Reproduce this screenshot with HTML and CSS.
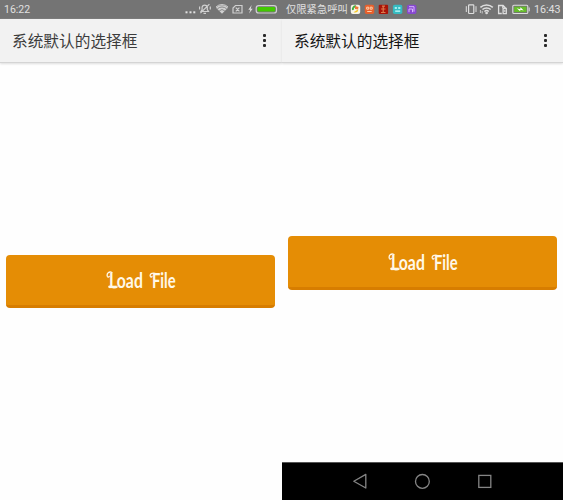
FILE: index.html
```html
<!DOCTYPE html>
<html lang="zh-CN">
<head>
<meta charset="utf-8">
<title>系统默认的选择框</title>
<link rel="stylesheet" href="styles.css">
</head>
<body>
<main class="screens">
  <section class="phone phone-left">
    <header class="status">
      <span class="clock">16:22</span>
      <svg class="status-icons" width="96" height="19" viewBox="0 0 96 19" fill="none" stroke="#d0d0d0">
        <g fill="#e2e2e2" stroke="none"><rect x="0.5" y="11.3" width="2" height="2"/><rect x="4.5" y="11.3" width="2" height="2"/><rect x="8.3" y="11.3" width="2" height="2"/></g>
        <path stroke-width="1.2" d="M16 11.5h7.5l-1.2-2V7a2.7 2.7 0 0 0-5.2 0v2.5zM18.5 13.3h2.5M15.4 13.2l9-9M14.6 6.5v3M25.3 6.5v3"/>
        <path d="M31 7.8a8.5 8.5 0 0 1 12 0l-6 6z" fill="#d0d0d0" stroke="none"/><path d="M32.3 8.9a6.7 6.7 0 0 1 9.4 0M34.2 10.9a4 4 0 0 1 5.6 0" stroke="#747474" stroke-width=".8"/><path d="M31 7a8.5 8.5 0 0 1 12 0"/>
        <path d="M50.5 5.5h6.5v7.5h-9V8zM50.8 7.7l3.6 3.6m0-3.6l-3.6 3.6" stroke-width="1.2"/>
        <path d="M66.7 5l-3.4 4.7h2L64 13.5l3.7-4.8h-2z" fill="#ddd" stroke="none"/>
        <rect x="71.2" y="5.6" width="20.3" height="7.4" rx="2.6" stroke-width="1.2"/>
        <rect x="72.6" y="7" width="17.5" height="4.6" rx="1.1" fill="#42c900" stroke="none"/>
      </svg>
    </header>
    <div class="toolbar"><h1>系统默认的选择框</h1><span class="more"><i></i><i></i><i></i></span></div>
    <div class="content">
      <button class="load"><span class="label"><span class="word">Load</span><span class="word">File</span>
        <svg class="swash" width="74" height="26" viewBox="0 0 74 26" fill="none" stroke="#fff8e8" stroke-width="1.3" stroke-linecap="round"><path d="M6 5.5C3 4 .5 6.5 1.3 9.2q.8 1.7 2 .2M5 19.3c-2.5-1-3 1.4-.8 1.2 2.5-.3 4.8 1.6 7-.6M49 6.3c-3-.7-5.2.5-4.8 2.7.2 1.5 1.5 1.3 1.8.3"/></svg>
      </span></button>
    </div>
  </section>
  <section class="phone phone-right">
    <header class="status">
      <span class="carrier">仅限紧急呼叫</span>
      <svg class="apps" width="68" height="19" viewBox="0 0 68 19">
        <rect x=".8" y="4.8" width="9.4" height="9.2" rx="2" fill="#f7f4e9"/><path d="M3 10a2.8 2.8 0 0 1 3-3.7" fill="none" stroke="#45af43" stroke-width="2"/><path d="M5 6l3.5 1-.5 2.5L5 9z" fill="#ef7938"/><path d="M3.5 12.3l4.8-3c0 2.5-2 4-4.8 3z" fill="#f6c726"/>
        <rect x="14.8" y="4.8" width="9.4" height="9.2" rx="1.8" fill="#e7602d"/><path d="M16.7 7.2h2v2h-2zM20.2 7.2h2v2h-2zM17.2 11.5h4.5" fill="none" stroke="#ffd1aa"/>
        <rect x="28.7" y="4.8" width="9.4" height="9.2" rx="1" fill="#a91408"/><path d="M32 6.2h3M33.2 6.5v6M31 9h4.5M31 12.5h4.5" stroke="#dc794d" stroke-width="1.2"/>
        <rect x="42.9" y="4.8" width="9.4" height="9.2" rx="1.8" fill="#36bbc1"/><path d="M44.7 8h2.2M48.2 8h2.2M45.2 11.2h5" stroke="#c9ffff" stroke-width="1.3"/>
        <rect x="57" y="4.8" width="9.4" height="9.2" rx="1.8" fill="#8748cf"/><path d="M59 6.7h5v5M59 9h3.5v3.2M59 9v3.2" fill="none" stroke="#d8b5ff"/>
      </svg>
      <svg class="status-icons" width="68" height="19" viewBox="0 0 68 19" fill="none" stroke="#dedede">
        <rect x="3.6" y="4.9" width="5.2" height="8.6" rx=".7" stroke-width="1.2"/><path d="M1.3 6.2v5.8M11 6.2v5.8"/>
        <g stroke-width="1.5"><path d="M15.4 7.4a9 9 0 0 1 12.4 0M17.5 9.5a6 6 0 0 1 8.2 0M19.5 11.6a3 3 0 0 1 4.2 0"/><circle cx="21.6" cy="13" r=".6" fill="#dedede"/></g><path d="M15.4 10v3M17.2 11v2.5" stroke-width=".8"/>
        <path d="M36.8 13.5h-3.2v-8h4.5L40.5 8M37.8 5.5V8M38.1 8.3h3.2v5.3h-3.2z" stroke-width="1.3"/><path d="M39.8 9.7v2.4"/>
        <rect x="47.8" y="5.3" width="15" height="8.2" rx="1" stroke-width="1.1"/><rect x="49.2" y="6.7" width="12.2" height="5.4" fill="#65bd2a" stroke="none"/><path d="M64.2 7.5v3.8"/><path d="M51.7 8.3l3.5 1 .3-2 3.2 3.2-3.3-.7-.3 1.4z" fill="#fff" stroke="none"/>
      </svg>
      <span class="clock">16:43</span>
    </header>
    <div class="toolbar"><h1>系统默认的选择框</h1><span class="more"><i></i><i></i><i></i></span></div>
    <div class="content">
      <button class="load"><span class="label"><span class="word">Load</span><span class="word">File</span>
        <svg class="swash" width="74" height="26" viewBox="0 0 74 26" fill="none" stroke="#fff8e8" stroke-width="1.3" stroke-linecap="round"><path d="M6 5.5C3 4 .5 6.5 1.3 9.2q.8 1.7 2 .2M5 19.3c-2.5-1-3 1.4-.8 1.2 2.5-.3 4.8 1.6 7-.6M49 6.3c-3-.7-5.2.5-4.8 2.7.2 1.5 1.5 1.3 1.8.3"/></svg>
      </span></button>
    </div>
    <nav class="navigation">
      <svg width="281" height="37" viewBox="0 0 281 37" fill="none" stroke="#858585" stroke-width="1.3"><path d="M71.8 18.2l12-6.8v13.6z" stroke-linejoin="round"/><circle cx="140.4" cy="18.4" r="6.9"/><rect x="196.8" y="12.4" width="12" height="12"/></svg>
    </nav>
  </section>
</main>
</body>
</html>
```
FILE: styles.css
```css
* { box-sizing: border-box; }
body { margin: 0; background: #fefefe; font-family: Roboto, "Noto Sans CJK SC", sans-serif; }
.screens { display: grid; grid-template-columns: 282px 281px; height: 500px; overflow: hidden; }
.phone { display: flex; flex-direction: column; min-width: 0; height: 500px; }
.status { display: flex; align-items: center; flex: 0 0 19px; height: 19px; background: #747474; color: #e0e0e0; }
.clock { font-size: 10.5px; line-height: 20px; white-space: nowrap; }
.phone-left .clock { padding-left: 4px; }
.phone-left .status-icons { margin-left: auto; margin-right: 1px; }
.phone-right .clock { width: 29px; font-size: 10.7px; }
.carrier { font-size: 10.3px; line-height: 19px; padding-left: 4px; width: 68px; white-space: nowrap; }
.status svg { display: block; flex: none; }
.phone-right .status-icons { margin-left: auto; margin-right: 1px; }
.toolbar { display: flex; align-items: center; justify-content: space-between; flex: 0 0 44px; height: 44px; background: #f2f2f2; border-bottom: 1px solid #d4d4d4; box-shadow: 0 1px 2px #dedede; }
.toolbar h1 { margin: 0 0 0 12px; font-size: 15.7px; line-height: 43px; font-weight: 400; color: #3c3c3c; font-family: "Noto Sans CJK SC", sans-serif; white-space: nowrap; }
.phone-right h1 { color: #151515; }
.more { display: flex; flex-direction: column; gap: 2px; margin-right: 16px; }
.more i { width: 3px; height: 3px; background: #292929; border-radius: 1px; }
.content { flex: 1; padding: 192px 7px 0 6px; }
.phone-right .content { padding-top: 173px; }
.load { display: flex; align-items: center; justify-content: center; width: 269px; height: 53px; padding: 0; border: 0; border-bottom: 3px solid #d77d00; border-radius: 4px; background: #e58d05; color: #fff8e8; }
.phone-right .load { height: 54px; }
.label { position: relative; display: flex; width: 70px; height: 26px; font: bold 20px/26px Lato, sans-serif; }
.word { display: block; flex: none; transform: scaleX(.79); transform-origin: left; white-space: nowrap; }
.word:first-child { width: 42px; margin-left: 3px; }
.word:nth-child(2) { width: 25px; transform: scaleX(.74); margin-left: 1px; }
.swash { position: absolute; left: 0; top: 0; }
.navigation { height: 38px; flex: 0 0 38px; background: #000; border-top: 1px solid #555; }
.navigation svg { display: block; }
```
